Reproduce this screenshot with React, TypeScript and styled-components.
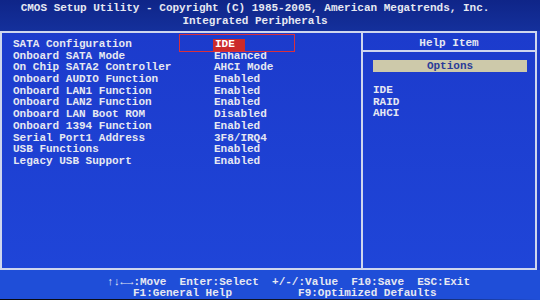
import React from "react";
import styled, { createGlobalStyle } from "styled-components";

const GlobalStyle = createGlobalStyle`
  html, body {
    margin: 0;
    padding: 0;
    background: #0a0a14;
  }
  body {
    font-family: "Liberation Mono", "DejaVu Sans Mono", monospace;
    font-weight: bold;
    font-size: 11px;
  }
`;

const Screen = styled.div`
  width: 540px;
  height: 300px;
  display: flex;
  flex-direction: column;
  overflow: hidden;
  background: #1e3dc6;
  color: #e6e8f2;
`;

const Header = styled.div`
  flex: 0 0 31px;
  background: linear-gradient(180deg, #0f2588 0%, #14309c 100%);
  display: flex;
  flex-direction: column;
  align-items: center;
  padding: 2px 30px 0 0;
  box-sizing: border-box;
  line-height: 12.5px;
`;

const HeaderLine = styled.div`
  white-space: pre;
`;

const Frame = styled.div`
  flex: 0 0 239px;
  box-sizing: border-box;
  margin: 0 3px 0 0;
  border: 2px solid #cfd6ee;
  display: grid;
  grid-template-columns: 361px 1fr;
  background: linear-gradient(180deg, #1c3bcc 0%, #1f45d8 100%);
`;

const LeftPane = styled.div`
  position: relative;
  padding: 6px 0 0 11px;
  border-right: 2px solid #cfd6ee;
`;

const Row = styled.div`
  display: grid;
  grid-template-columns: 201px 1fr;
  height: 11.7px;
  line-height: 11.7px;
  white-space: pre;
`;

const Value = styled.span<{ $active?: boolean }>`
  justify-self: start;
  padding: ${({ $active }) => ($active ? "0 10px 0 2px" : "0")};
  margin-left: ${({ $active }) => ($active ? "-1px" : "0")};
  background: ${({ $active }) => ($active ? "#cc2a2a" : "transparent")};
  color: ${({ $active }) => ($active ? "#ffffff" : "inherit")};
`;

const SelectFrame = styled.div`
  position: absolute;
  left: 177px;
  top: 1px;
  width: 114px;
  height: 16px;
  border: 1px solid #d8303c;
`;

const RightPane = styled.div`
  display: flex;
  flex-direction: column;
`;

const HelpTitle = styled.div`
  height: 19px;
  border-bottom: 2px solid #cfd6ee;
  display: flex;
  align-items: center;
  justify-content: center;
  padding-top: 2px;
  box-sizing: border-box;
`;

const OptionsBar = styled.div`
  margin: 8px 8px 0 10px;
  height: 12px;
  background: #cdc9aa;
  color: #2a3b98;
  display: flex;
  align-items: center;
  justify-content: center;
`;

const OptionList = styled.div`
  margin: 13px 0 0 10px;
  line-height: 11.7px;
`;

const Footer = styled.div`
  flex: 0 0 28px;
  background: #1f4ed8;
  display: flex;
  flex-direction: column;
  padding-top: 7px;
  box-sizing: border-box;
  line-height: 11px;
`;

const FooterLine = styled.div<{ $indent: number }>`
  padding-left: ${({ $indent }) => $indent}px;
  white-space: pre;
`;

const BottomEdge = styled.div`
  flex: 0 0 2px;
  background: linear-gradient(90deg, #08080c 0%, #101830 70%, #1f4ed8 100%);
`;

const items: [string, string][] = [
  ["SATA Configuration", "IDE"],
  ["Onboard SATA Mode", "Enhanced"],
  ["On Chip SATA2 Controller", "AHCI Mode"],
  ["Onboard AUDIO Function", "Enabled"],
  ["Onboard LAN1 Function", "Enabled"],
  ["Onboard LAN2 Function", "Enabled"],
  ["Onboard LAN Boot ROM", "Disabled"],
  ["Onboard 1394 Function", "Enabled"],
  ["Serial Port1 Address", "3F8/IRQ4"],
  ["USB Functions", "Enabled"],
  ["Legacy USB Support", "Enabled"],
];

export default function App() {
  return (
    <>
      <GlobalStyle />
      <Screen>
        <Header>
          <HeaderLine>CMOS Setup Utility - Copyright (C) 1985-2005, American Megatrends, Inc.</HeaderLine>
          <HeaderLine>Integrated Peripherals</HeaderLine>
        </Header>
        <Frame>
          <LeftPane>
            <SelectFrame />
            {items.map(([label, value], i) => (
              <Row key={label}>
                <span>{label}</span>
                <Value $active={i === 0}>{value}</Value>
              </Row>
            ))}
          </LeftPane>
          <RightPane>
            <HelpTitle>Help Item</HelpTitle>
            <OptionsBar>Options</OptionsBar>
            <OptionList>
              <div>IDE</div>
              <div>RAID</div>
              <div>AHCI</div>
            </OptionList>
          </RightPane>
        </Frame>
        <Footer>
          <FooterLine $indent={107}>{"↑↓←→:Move  Enter:Select  +/-/:Value  F10:Save  ESC:Exit"}</FooterLine>
          <FooterLine $indent={133}>{"F1:General Help          F9:Optimized Defaults"}</FooterLine>
        </Footer>
        <BottomEdge />
      </Screen>
    </>
  );
}
